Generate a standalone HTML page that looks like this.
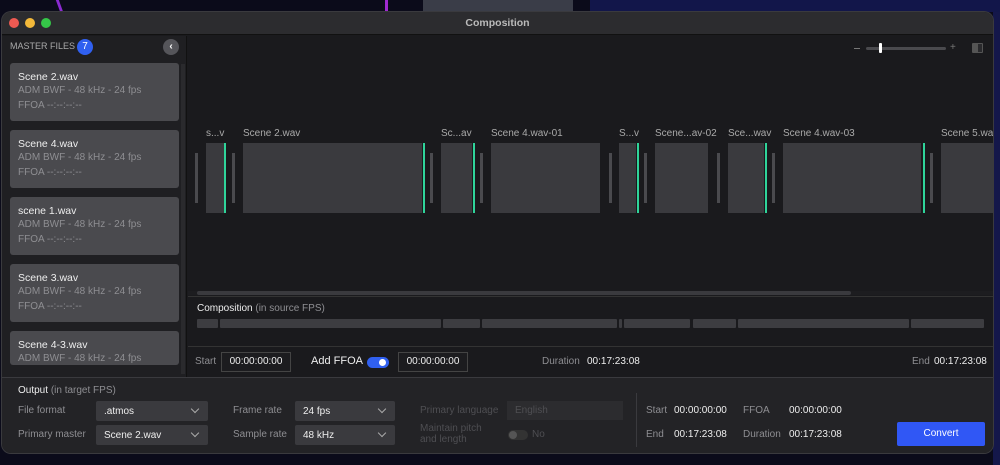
<!DOCTYPE html>
<html><head><meta charset="utf-8"><style>
*{margin:0;padding:0;box-sizing:border-box}
body{width:1000px;height:465px;overflow:hidden;background:#0b0b1a;font-family:"Liberation Sans",sans-serif;position:relative;color:#ddd}
.a{position:absolute}
.win{left:2px;top:12px;width:991px;height:441px;background:#1a1a1d;border-radius:9px;overflow:hidden;box-shadow:0 0 0 1px #3a3a3e}
.t{font-size:10px;white-space:nowrap}
.card{position:absolute;left:8px;width:169px;height:58px;background:#4a4a4e;border-radius:3px}
.card .n{position:absolute;left:8px;top:8px;font-size:10.5px;color:#eee;white-space:nowrap}
.card .s{position:absolute;left:8px;font-size:10px;color:#8e8e92;white-space:nowrap}
.clip{position:absolute;top:131px;height:70px;background:#3a3a3e}
.g{position:absolute;top:131px;width:2px;height:70px;background:#2fd49a}
.m{position:absolute;top:141px;width:3px;height:50px;background:#4a4a4e}
.lab{position:absolute;top:116px;font-size:10px;color:#aaa;white-space:nowrap}
.cb{position:absolute;top:307px;height:9px;background:#3d3d41;border-radius:1px}
.sel{position:absolute;height:20px;background:#3a3a3e;border-radius:2px;font-size:10px;color:#eee;padding:5px 0 0 8px;white-space:nowrap}
.sel:after{content:"";position:absolute;right:10px;top:5px;width:5px;height:5px;border-right:1.3px solid #aaa;border-bottom:1.3px solid #aaa;transform:rotate(45deg)}
.lb{position:absolute;font-size:10px;color:#8e8e92;white-space:nowrap}
.v{position:absolute;font-size:10px;color:#eee;white-space:nowrap}
</style></head><body>
<div class="a" style="left:58px;top:0;width:3px;height:12px;background:#8a2ad0;transform:skewX(20deg)"></div>
<div class="a" style="left:385px;top:0;width:3px;height:12px;background:#a02ad0"></div>
<div class="a" style="left:423px;top:0;width:150px;height:12px;background:#3a3d48"></div>
<div class="a" style="left:590px;top:0;width:410px;height:12px;background:#12164a"></div>
<div class="a" style="left:993px;top:12px;width:7px;height:453px;background:#14174a"></div>
<div class="win a">
 <div class="a" style="left:0;top:0;width:991px;height:23px;background:#2c2c2f;border-bottom:1px solid #111"></div>
 <div class="a" style="left:7px;top:6px;width:10px;height:10px;border-radius:50%;background:#ee5a52"></div>
 <div class="a" style="left:23px;top:6px;width:10px;height:10px;border-radius:50%;background:#f3b93a"></div>
 <div class="a" style="left:39px;top:6px;width:10px;height:10px;border-radius:50%;background:#35c748"></div>
 <div class="a t" style="left:0;width:991px;top:5px;text-align:center;font-weight:bold;color:#bbb;font-size:10.5px">Composition</div>
 <div class="a" style="left:0;top:24px;width:185px;height:341px;background:#1f1f22;border-right:1px solid #111"></div>
 <div class="a" style="left:8px;top:29px;color:#aaa;font-size:9px;white-space:nowrap">MASTER FILES</div>
 <div class="a t" style="left:75px;top:27px;width:16px;height:16px;border-radius:50%;background:#3060f0;color:#fff;text-align:center;line-height:16px">7</div>
 <div class="a" style="left:161px;top:27px;width:16px;height:16px;border-radius:50%;background:#55555a;color:#fff;font-size:10px;text-align:center;line-height:15px;font-weight:bold">&#8249;</div>
 <div class="a" style="left:179px;top:52px;width:4px;height:310px;background:#2a2a2d"></div>
 <div class="card" style="top:51px"><div class="n">Scene 2.wav</div><div class="s" style="top:22px">ADM BWF - 48 kHz - 24 fps</div><div class="s" style="top:37px">FFOA --:--:--:--</div></div>
 <div class="card" style="top:118px"><div class="n">Scene 4.wav</div><div class="s" style="top:22px">ADM BWF - 48 kHz - 24 fps</div><div class="s" style="top:37px">FFOA --:--:--:--</div></div>
 <div class="card" style="top:185px"><div class="n">scene 1.wav</div><div class="s" style="top:22px">ADM BWF - 48 kHz - 24 fps</div><div class="s" style="top:37px">FFOA --:--:--:--</div></div>
 <div class="card" style="top:252px"><div class="n">Scene 3.wav</div><div class="s" style="top:22px">ADM BWF - 48 kHz - 24 fps</div><div class="s" style="top:37px">FFOA --:--:--:--</div></div>
 <div class="card" style="top:319px;height:34px;overflow:hidden"><div class="n">Scene 4-3.wav</div><div class="s" style="top:22px">ADM BWF - 48 kHz - 24 fps</div></div>
 <div class="a" style="left:852px;top:36px;width:6px;height:1px;background:#777"></div>
 <div class="a" style="left:864px;top:35px;width:80px;height:3px;background:#4a4a4e;border-radius:2px"></div>
 <div class="a" style="left:877px;top:31px;width:3px;height:10px;background:#fff;border-radius:1px"></div>
 <div class="a t" style="left:948px;top:30px;color:#777">+</div>
 <div class="a" style="left:970px;top:31px;width:11px;height:10px;background:#555;border-radius:1px"><div class="a" style="left:6px;top:1px;width:4px;height:8px;background:#2a2a2d"></div></div>
 <div class="m" style="left:193px"></div>
 <div class="lab" style="left:204px">s...v</div><div class="clip" style="left:204px;width:18px"></div><div class="g" style="left:222px"></div><div class="m" style="left:230px"></div>
 <div class="lab" style="left:241px">Scene 2.wav</div><div class="clip" style="left:241px;width:179px"></div><div class="g" style="left:421px"></div><div class="m" style="left:428px"></div>
 <div class="lab" style="left:439px">Sc...av</div><div class="clip" style="left:439px;width:31px"></div><div class="g" style="left:471px"></div><div class="m" style="left:478px"></div>
 <div class="lab" style="left:489px">Scene 4.wav-01</div><div class="clip" style="left:489px;width:109px"></div><div class="m" style="left:607px"></div>
 <div class="lab" style="left:617px">S...v</div><div class="clip" style="left:617px;width:17px"></div><div class="g" style="left:635px"></div><div class="m" style="left:642px"></div>
 <div class="lab" style="left:653px">Scene...av-02</div><div class="clip" style="left:653px;width:53px"></div><div class="m" style="left:715px"></div>
 <div class="lab" style="left:726px">Sce...wav</div><div class="clip" style="left:726px;width:36px"></div><div class="g" style="left:763px"></div><div class="m" style="left:770px"></div>
 <div class="lab" style="left:781px">Scene 4.wav-03</div><div class="clip" style="left:781px;width:138px"></div><div class="g" style="left:921px"></div><div class="m" style="left:928px"></div>
 <div class="lab" style="left:939px">Scene 5.wav</div><div class="clip" style="left:939px;width:60px"></div>
 <div class="a" style="left:186px;top:279px;width:805px;height:4px;background:#1d1d20"></div>
 <div class="a" style="left:195px;top:279px;width:654px;height:4px;background:#3a3a3e;border-radius:2px"></div>
 <div class="a" style="left:186px;top:284px;width:805px;height:1px;background:#333"></div>
 <div class="a t" style="left:195px;top:291px;color:#eee">Composition <span style="color:#8e8e92">(in source FPS)</span></div>
 <div class="cb" style="left:195px;width:21px"></div><div class="cb" style="left:218px;width:221px"></div><div class="cb" style="left:441px;width:37px"></div><div class="cb" style="left:480px;width:135px"></div><div class="cb" style="left:617px;width:3px"></div><div class="cb" style="left:622px;width:66px"></div><div class="cb" style="left:691px;width:43px"></div><div class="cb" style="left:736px;width:171px"></div><div class="cb" style="left:909px;width:73px"></div>
 <div class="a" style="left:186px;top:334px;width:805px;height:1px;background:#333"></div>
 <div class="lb" style="left:193px;top:344px">Start</div>
 <div class="a t" style="left:219px;top:340px;width:70px;height:20px;border:1px solid #444;background:#1c1c1f;color:#eee;text-align:center;line-height:18px">00:00:00:00</div>
 <div class="a" style="left:309px;top:343px;font-size:11px;color:#eee">Add FFOA</div>
 <div class="a" style="left:365px;top:345px;width:22px;height:11px;border-radius:6px;background:#3060f0"><div class="a" style="left:12px;top:2px;width:7px;height:7px;border-radius:50%;background:#fff"></div></div>
 <div class="a t" style="left:396px;top:340px;width:70px;height:20px;border:1px solid #444;background:#1c1c1f;color:#eee;text-align:center;line-height:18px">00:00:00:00</div>
 <div class="lb" style="left:540px;top:344px">Duration</div><div class="v" style="left:585px;top:344px">00:17:23:08</div>
 <div class="lb" style="left:910px;top:344px">End</div><div class="v" style="left:932px;top:344px">00:17:23:08</div>
 <div class="a" style="left:0;top:365px;width:991px;height:76px;background:#232326;border-top:1px solid #3a3a3e"></div>
 <div class="a t" style="left:16px;top:373px;color:#eee">Output <span style="color:#8e8e92">(in target FPS)</span></div>
 <div class="lb" style="left:16px;top:393px">File format</div>
 <div class="sel" style="left:94px;top:389px;width:112px">.atmos</div>
 <div class="lb" style="left:16px;top:417px">Primary master</div>
 <div class="sel" style="left:94px;top:413px;width:112px">Scene 2.wav</div>
 <div class="lb" style="left:231px;top:393px">Frame rate</div>
 <div class="sel" style="left:293px;top:389px;width:100px">24 fps</div>
 <div class="lb" style="left:231px;top:417px">Sample rate</div>
 <div class="sel" style="left:293px;top:413px;width:100px">48 kHz</div>
 <div class="lb" style="left:418px;top:393px;color:#4e4e52">Primary language</div>
 <div class="a t" style="left:505px;top:389px;width:116px;height:19px;background:#2c2c2f;color:#4e4e52;padding:4px 0 0 8px">English</div>
 <div class="lb" style="left:418px;top:411px;color:#4e4e52;line-height:11px">Maintain pitch<br>and length</div>
 <div class="a" style="left:506px;top:418px;width:20px;height:10px;border-radius:5px;background:#333"><div class="a" style="left:1px;top:1px;width:8px;height:8px;border-radius:50%;background:#555"></div></div>
 <div class="lb" style="left:530px;top:417px;color:#4e4e52">No</div>
 <div class="a" style="left:634px;top:381px;width:1px;height:54px;background:#3a3a3e"></div>
 <div class="lb" style="left:644px;top:393px">Start</div><div class="v" style="left:672px;top:393px">00:00:00:00</div>
 <div class="lb" style="left:741px;top:393px">FFOA</div><div class="v" style="left:787px;top:393px">00:00:00:00</div>
 <div class="lb" style="left:644px;top:417px">End</div><div class="v" style="left:672px;top:417px">00:17:23:08</div>
 <div class="lb" style="left:741px;top:417px">Duration</div><div class="v" style="left:787px;top:417px">00:17:23:08</div>
 <div class="a t" style="left:895px;top:410px;width:88px;height:24px;background:#3057f5;border-radius:2px;color:#fff;text-align:center;line-height:24px">Convert</div>
</div>
</body></html>
